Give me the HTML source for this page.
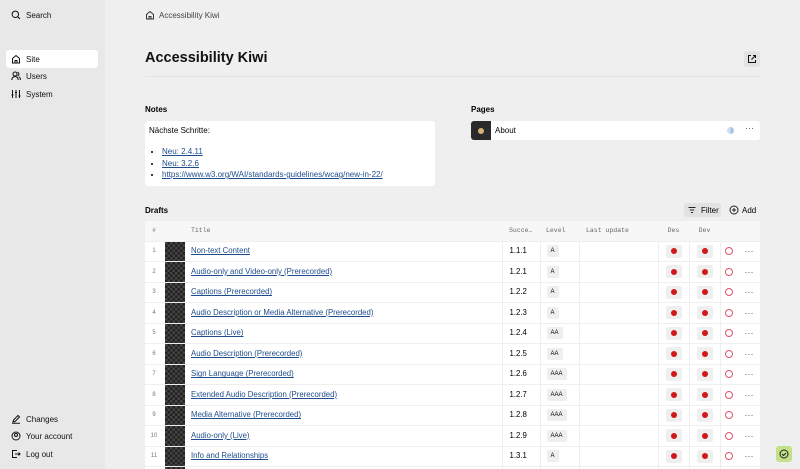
<!DOCTYPE html>
<html style="overflow:hidden;height:469px"><head><meta charset="utf-8"><style>
*{box-sizing:border-box;margin:0;padding:0}
body{width:800px;height:469px;overflow:hidden;background:#efefef;font-family:"Liberation Sans",sans-serif;font-size:8px;color:#000;position:relative}
.side{position:absolute;left:0;top:0;width:105px;height:469px;background:#e8e8e8}
.nav{position:absolute;left:6px;height:18px;width:92px;display:flex;align-items:center;padding-left:5px;font-size:8px;color:#111}
.nav svg{width:10px;height:10px;margin-right:5px}
.active{background:#fff;border-radius:3px}
.abs{position:absolute}
.card{background:#fff;border-radius:3px;position:absolute}
a{color:#1f4d8c;text-decoration:underline}
.wrap{position:absolute;left:145px;top:221px;width:615px;height:248px;overflow:hidden}
table{width:615px;border-collapse:collapse;font-size:7.8px;table-layout:fixed}
tr.r{height:20.5px}
td,th{padding:0;border-bottom:1px solid #efefef;vertical-align:middle;overflow:hidden;white-space:nowrap;line-height:10px}
th{font-family:"Liberation Mono",monospace;font-weight:normal;color:#666;font-size:6.5px;text-align:left;background:#f7f7f7;height:20px}
tr.r td{background:#fff}
.num{color:#777;text-align:center;font-size:6px}
.th div{width:20px;height:19.5px;margin-left:2px;background:repeating-conic-gradient(#222 0 25%,#444 0 50%) 0 0/5px 5px}
.bx{display:inline-block;background:#efefef;border-radius:2px;padding:2px 4px;font-size:6px;line-height:8px}
.dot{display:inline-block;width:16px;height:13px;background:#efefef;border-radius:2px;position:relative;vertical-align:middle}
.dot:after{content:"";position:absolute;left:5px;top:3.5px;width:6px;height:6px;border-radius:50%;background:#d01818}
.circ{display:inline-block;width:8px;height:8px;border:1px solid #e0556a;border-radius:50%;vertical-align:middle}
.vl{border-left:1px solid #efefef}
</style></head><body>
<div class="side">
 <div class="nav" style="top:6px"><svg viewBox="0 0 10 10"><circle cx="4.3" cy="4.3" r="3.2" fill="none" stroke="#111"/><path d="M6.6 6.6L9 9" stroke="#111"/></svg>Search</div>
 <div class="nav active" style="top:50px"><svg viewBox="0 0 10 10"><path d="M1.5 4.5L5 1.5 8.5 4.5V9H1.5Z M4 9V6.5H6V9" fill="none" stroke="#111"/></svg>Site</div>
 <div class="nav" style="top:67px"><svg viewBox="0 0 10 10"><circle cx="4" cy="3" r="2" fill="none" stroke="#111"/><path d="M0.8 9c0-2 1.5-3.5 3.2-3.5S7.2 7 7.2 9M6.5 1.2a2 2 0 010 3.8M8 5.8c1 .6 1.4 1.8 1.4 3.2" fill="none" stroke="#111"/></svg>Users</div>
 <div class="nav" style="top:85px"><svg viewBox="0 0 10 10"><path d="M1.5 1v8M5 1v8M8.5 1v8M0.5 6h2M4 3.5h2M7.5 7h2" stroke="#111"/></svg>System</div>
 <div class="nav" style="top:410px"><svg viewBox="0 0 10 10"><path d="M2 8l.5-2L7 1.5 8.5 3 4 7.5Z M1 9.3h8" fill="none" stroke="#111"/></svg>Changes</div>
 <div class="nav" style="top:427px"><svg viewBox="0 0 10 10"><circle cx="5" cy="5" r="4" fill="none" stroke="#111"/><circle cx="5" cy="4" r="1.5" fill="none" stroke="#111"/></svg>Your account</div>
 <div class="nav" style="top:445px"><svg viewBox="0 0 10 10"><path d="M6 1.5H1.5v7H6M4 5h5M7.5 3.5L9 5 7.5 6.5" fill="none" stroke="#111"/></svg>Log out</div>
</div>
<svg class="abs" style="left:145px;top:10px" width="10" height="10" viewBox="0 0 10 10"><path d="M1.5 4.5L5 1.5 8.5 4.5V9H1.5Z M4 9V6.5H6V9" fill="none" stroke="#333"/></svg>
<div class="abs" style="left:159px;top:11px;color:#444">Accessibility Kiwi</div>
<div class="abs" style="left:145px;top:50px;font-size:14.5px;font-weight:bold;color:#111">Accessibility Kiwi</div>
<div class="abs" style="left:744px;top:51px;width:16px;height:16px;background:#e2e2e2;border-radius:3px"><svg width="16" height="16" viewBox="0 0 16 16"><path d="M7 4.5H4.5v7h7V9M9 4.5h2.5V7M11.5 4.5L7.5 8.5" fill="none" stroke="#111"/></svg></div>
<div class="abs" style="left:145px;top:76px;width:615px;height:1px;background:#e2e2e2"></div>
<div class="abs" style="left:145px;top:105px;font-weight:bold">Notes</div>
<div class="card" style="left:145px;top:121px;width:290px;height:65px;padding:5px 4px;font-size:8px">
 <div>Nächste Schritte:</div>
 <ul style="margin:11px 0 0 13px;line-height:11.5px;font-size:8px">
 <li><a>Neu: 2.4.11</a></li><li><a>Neu: 3.2.6</a></li><li><a>https://www.w3.org/WAI/standards-guidelines/wcag/new-in-22/</a></li></ul>
</div>
<div class="abs" style="left:471px;top:105px;font-weight:bold">Pages</div>
<div class="card" style="left:471px;top:121px;width:289px;height:19px">
 <div class="abs" style="left:0;top:0;width:20px;height:19px;background:#2a2a2a;border-radius:3px 0 0 3px"><div style="margin:7px 0 0 7px;width:6px;height:6px;border-radius:50%;background:#d8b27a"></div></div>
 <div class="abs" style="left:24px;top:5px">About</div>
 <div class="abs" style="left:256px;top:6px;width:7px;height:7px;border-radius:50%;background:linear-gradient(90deg,#cfe0f5 50%,#a8c4e8 50%)"></div>
 <div class="abs" style="left:274px;top:2px;color:#555;font-size:9px">···</div>
</div>
<div class="abs" style="left:145px;top:206px;font-weight:bold">Drafts</div>
<div class="abs" style="left:684px;top:203px;width:37px;height:14px;background:#e2e2e2;border-radius:3px;padding:3px 0 0 17px">Filter<svg class="abs" style="left:4px;top:3px" width="8" height="8" viewBox="0 0 8 8"><path d="M0.5 1.5h7M1.8 4h4.4M3 6.5h2" stroke="#222"/></svg></div>
<div class="abs" style="left:728px;top:206px;padding-left:14px">Add<svg class="abs" style="left:1px;top:-1px" width="10" height="10" viewBox="0 0 10 10"><circle cx="5" cy="5" r="4" fill="none" stroke="#222"/><path d="M5 3v4M3 5h4" stroke="#222"/></svg></div>
<div class="wrap"><table>
<colgroup><col style="width:18px"><col style="width:28px"><col><col style="width:38px"><col style="width:39px"><col style="width:79px"><col style="width:31px"><col style="width:31px"><col style="width:18px"><col style="width:22px"></colgroup>
<tr><th class="num" style="text-align:center">#</th><th></th><th>Title</th><th style="padding-left:7px">Succe…</th><th style="padding-left:6px">Level</th><th style="padding-left:7px">Last update</th><th style="text-align:center">Des</th><th style="text-align:center">Dev</th><th></th><th></th></tr>
<tbody id="b"></tbody>
</table></div>
<div class="abs" style="left:776px;top:446px;width:16px;height:16px;background:#c5e08a;border-radius:3px"><svg width="16" height="16" viewBox="0 0 16 16"><circle cx="8" cy="8" r="4" fill="none" stroke="#222"/><path d="M6 8l1.5 1.5L10 7" fill="none" stroke="#222"/></svg></div>
<script>
var d=[["Non-text Content","1.1.1","A"],["Audio-only and Video-only (Prerecorded)","1.2.1","A"],["Captions (Prerecorded)","1.2.2","A"],["Audio Description or Media Alternative (Prerecorded)","1.2.3","A"],["Captions (Live)","1.2.4","AA"],["Audio Description (Prerecorded)","1.2.5","AA"],["Sign Language (Prerecorded)","1.2.6","AAA"],["Extended Audio Description (Prerecorded)","1.2.7","AAA"],["Media Alternative (Prerecorded)","1.2.8","AAA"],["Audio-only (Live)","1.2.9","AAA"],["Info and Relationships","1.3.1","A"],["Identify Input Purpose","1.3.5","AA"]];
var h="";d.forEach(function(r,i){h+='<tr class="r"><td class="num">'+(i+1)+'</td><td class="th"><div></div></td><td><a>'+r[0]+'</a></td><td style="padding-left:7px" class="vl">'+r[1]+'</td><td class="vl" style="padding-left:6px"><span class="bx">'+r[2]+'</span></td><td class="vl"></td><td class="vl" style="text-align:center"><span class="dot"></span></td><td class="vl" style="text-align:center"><span class="dot"></span></td><td class="vl" style="text-align:center"><span class="circ"></span></td><td style="color:#555;font-size:9px;text-align:center">···</td></tr>'});
document.getElementById("b").innerHTML=h;
</script>
</body></html>
